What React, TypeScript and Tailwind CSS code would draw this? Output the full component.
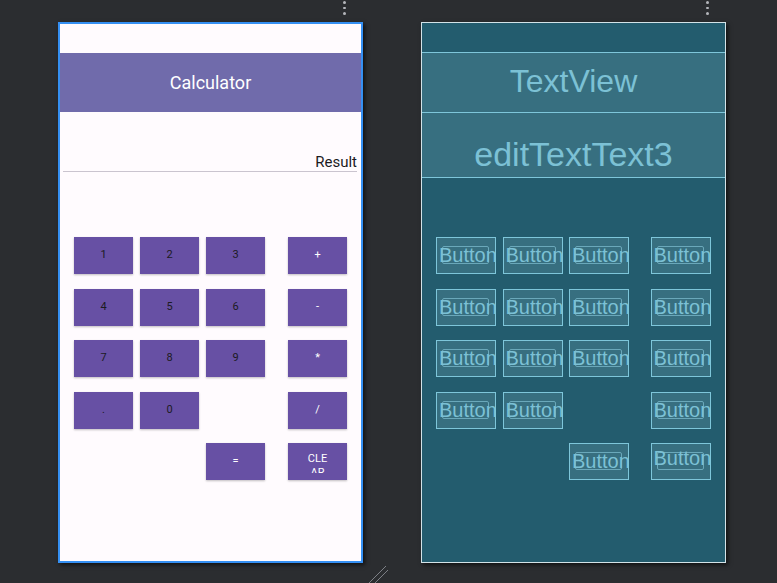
import React from 'react'

type Cell = { label: string; op?: boolean } | null

const rows: Cell[][] = [
  [{ label: '1' }, { label: '2' }, { label: '3' }, { label: '+', op: true }],
  [{ label: '4' }, { label: '5' }, { label: '6' }, { label: '-', op: true }],
  [{ label: '7' }, { label: '8' }, { label: '9' }, { label: '*', op: true }],
  [{ label: '.' }, { label: '0' }, null, { label: '/', op: true }],
  [null, null, { label: '=', op: true }, { label: 'CLEAR', op: true }],
]

const Dots = () => (
  <div className="flex flex-col items-center gap-[3px] pt-[1px]">
    <span className="w-[2.5px] h-[2.5px] rounded-full bg-[#b4b6bb]" />
    <span className="w-[2.5px] h-[2.5px] rounded-full bg-[#b4b6bb]" />
    <span className="w-[2.5px] h-[2.5px] rounded-full bg-[#b4b6bb]" />
  </div>
)

const CalcButton = ({ cell }: { cell: Cell }) => {
  if (!cell) return <div className="w-[59px] h-[37px]" />
  if (cell.label === 'CLEAR') {
    return (
      <div className="w-[59px] h-[37px] bg-[#6750a4] shadow-[0_1px_2px_rgba(0,0,0,0.25)]">
        <div className="h-[30px] overflow-hidden flex flex-col items-center pt-[9px] text-white text-[11px] leading-[14px]">
          <span>CLE</span>
          <span>AR</span>
        </div>
      </div>
    )
  }
  return (
    <div
      className={`w-[59px] h-[37px] bg-[#6750a4] shadow-[0_1px_2px_rgba(0,0,0,0.25)] flex items-center justify-center text-[11px] ${
        cell.op ? 'text-white' : 'text-[#1c1b1f]'
      }`}
    >
      {cell.label}
    </div>
  )
}

const BlueprintButton = ({ cell, lift }: { cell: Cell; lift?: boolean }) => {
  if (!cell) return <div className="w-[60px] h-[37px]" />
  return (
    <div className="relative w-[60px] h-[37px] border border-[#7ec6da] bg-[#376f80] overflow-hidden">
      <div className="absolute left-[5px] right-[6px] top-[8px] bottom-[9px] border border-[#6aa8ba] rounded-[2px]" />
      <div
        className={`absolute left-[2px] ${lift ? 'top-[3px]' : 'top-[6px]'} whitespace-nowrap text-[20px] leading-[22px] text-[#7cc1d5]`}
        style={{ fontFamily: '"Liberation Sans", Arial, sans-serif' }}
      >
        Button
      </div>
    </div>
  )
}

const Phone = () => (
  <div className="w-[305px] h-[541px] border-2 border-[#3590f3] bg-[#fffbfe] shadow-[2px_2px_4px_rgba(0,0,0,0.6)] flex flex-col">
    <div className="h-[29px]" />
    <div className="h-[59px] bg-[#706bab] flex items-center justify-center text-white text-[18px]">
      Calculator
    </div>
    <div className="h-[60px] mx-[3px] mr-[4px] border-b border-[#cac4cf] flex items-end justify-end">
      <span className="text-[15px] leading-[18px] text-[#1c1b1f]">Result</span>
    </div>
    <div className="mt-[65px] pl-[14px] flex flex-col gap-[14.5px]">
      {rows.map((row, i) => (
        <div key={i} className="flex gap-[7px]">
          <CalcButton cell={row[0]} />
          <CalcButton cell={row[1]} />
          <CalcButton cell={row[2]} />
          <div className="ml-[16px]">
            <CalcButton cell={row[3]} />
          </div>
        </div>
      ))}
    </div>
  </div>
)

const Blueprint = () => (
  <div
    className="w-[305px] h-[541px] border border-[#d3e3e8] bg-[#235c6e] shadow-[2px_2px_4px_rgba(0,0,0,0.6)] flex flex-col"
    style={{ fontFamily: '"Liberation Sans", Arial, sans-serif' }}
  >
    <div className="h-[29px]" />
    <div className="h-[61px] border-y border-[#7ec6da] bg-[#376f80] flex items-center justify-center pb-[4px] text-[32px] text-[#7cc1d5]">
      TextView
    </div>
    <div className="h-[65px] border-b border-[#7ec6da] bg-[#376f80] flex items-center justify-center pt-[18px] text-[34px] text-[#7cc1d5]">
      editTextText3
    </div>
    <div className="mt-[59px] pl-[14px] flex flex-col gap-[14.5px]">
      {rows.map((row, i) => (
        <div key={i} className="flex gap-[6.5px]">
          <BlueprintButton cell={row[0]} />
          <BlueprintButton cell={row[1]} />
          <BlueprintButton cell={row[2]} />
          <div className="ml-[15px]">
            <BlueprintButton cell={row[3]} lift={i === 4} />
          </div>
        </div>
      ))}
    </div>
  </div>
)

export default function App() {
  return (
    <div
      className="relative w-[777px] h-[583px] bg-[#2b2d30] overflow-hidden"
      style={{ fontFamily: 'Roboto, "Noto Sans", sans-serif' }}
    >
      <div className="absolute left-[343px] top-0">
        <Dots />
      </div>
      <div className="absolute left-[706px] top-0">
        <Dots />
      </div>
      <div className="flex pl-[58px] pt-[22px] gap-[58px]">
        <Phone />
        <Blueprint />
      </div>
      <svg className="absolute left-[366px] top-[566px]" width="22" height="17" viewBox="0 0 22 17">
        <line x1="3" y1="17" x2="20" y2="0" stroke="#7d8086" strokeWidth="1" />
        <line x1="9" y1="17" x2="22" y2="4" stroke="#7d8086" strokeWidth="1" />
      </svg>
    </div>
  )
}
